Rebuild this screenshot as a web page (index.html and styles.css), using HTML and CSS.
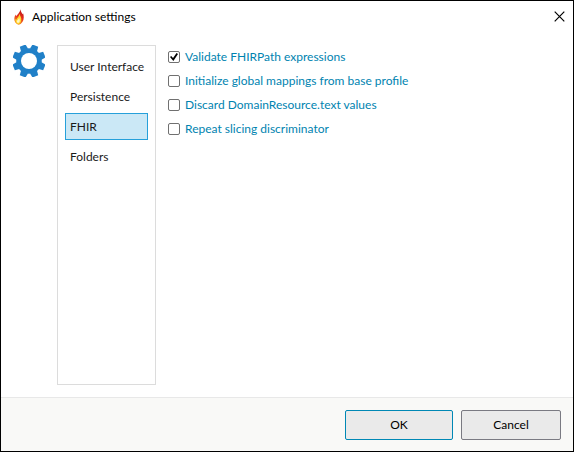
FILE: index.html
```html
<!DOCTYPE html>
<html lang="en">
<head>
<meta charset="utf-8">
<title>Application settings</title>
<link rel="stylesheet" href="styles.css">
</head>
<body>
<main class="window">
  <header class="titlebar">
    <svg class="flame" viewBox="0 0 12 16" aria-hidden="true">
      <defs>
        <linearGradient id="fire" x1="0.7" y1="0" x2="0.35" y2="1">
          <stop offset="0" stop-color="#b91414"/>
          <stop offset="0.5" stop-color="#e8301c"/>
          <stop offset="1" stop-color="#f6a21c"/>
        </linearGradient>
      </defs>
      <path fill="url(#fire)" d="M7.5 0.2C7.6 2.5 8.8 3.6 9.4 5.2C9.8 5 10 4.6 10 4C11 6.8 11.2 10.5 9.4 13C8.3 14.6 7 15.8 5.3 15.8C2.8 15 1.2 12.6 1.3 9.8C1.4 8 2 6.6 2.5 5.4C2.6 6.2 2.8 6.7 3.3 7C4.6 5.2 6.9 3.4 7.5 0.2Z"/>
      <path fill="#ffd92e" d="M6.4 4.8C6.8 7 8.9 8.6 8.2 11.4C7.8 13.4 6.6 14.8 5.1 15C3.2 14.2 2.2 12.4 2.4 10C2.8 10.6 3.1 10.8 3.5 10.8C4 8.8 6.4 7.6 6.4 4.8Z"/>
      <path fill="#fff6c4" d="M6.1 8.6C6.4 10.2 7.1 11 6.7 12.6C6.3 13.7 5.6 14.1 4.9 14C3.9 13.4 3.6 12.4 4.1 11.4C5 11 5.9 10.2 6.1 8.6Z"/>
    </svg>
    <h1 class="title">Application settings</h1>
    <button class="close" type="button" aria-label="Close">
      <svg class="close-icon" viewBox="0 0 11 11" aria-hidden="true"><path d="M0.7 0.7L10.3 10.3M10.3 0.7L0.7 10.3"/></svg>
    </button>
  </header>
  <form class="dialog">
    <div class="content">
      <svg class="gear" viewBox="-16 -16 32 32" aria-hidden="true">
        <defs><path id="tooth" d="M-3.6 -10V-13L-3.1 -16.6H3.1L3.6 -13V-10Z"/></defs>
        <circle r="10.8"/>
        <g class="teeth">
          <use href="#tooth" transform="rotate(22.5)"/>
          <use href="#tooth" transform="rotate(67.5)"/>
          <use href="#tooth" transform="rotate(112.5)"/>
          <use href="#tooth" transform="rotate(157.5)"/>
          <use href="#tooth" transform="rotate(202.5)"/>
          <use href="#tooth" transform="rotate(247.5)"/>
          <use href="#tooth" transform="rotate(292.5)"/>
          <use href="#tooth" transform="rotate(337.5)"/>
        </g>
        <circle class="hole" r="8"/>
      </svg>
      <nav class="sections">
        <a class="section" href="#ui">User Interface</a>
        <a class="section" href="#persistence">Persistence</a>
        <a class="section selected" href="#fhir" aria-current="page">FHIR</a>
        <a class="section" href="#folders">Folders</a>
      </nav>
      <div class="options">
        <label class="option"><input type="checkbox" checked>Validate FHIRPath expressions</label>
        <label class="option"><input type="checkbox">Initialize global mappings from base profile</label>
        <label class="option"><input type="checkbox">Discard DomainResource.text values</label>
        <label class="option"><input type="checkbox">Repeat slicing discriminator</label>
      </div>
    </div>
    <footer class="footer">
      <button class="button primary" type="button">OK</button>
      <button class="button" type="button">Cancel</button>
    </footer>
  </form>
</main>
</body>
</html>
```
FILE: styles.css
```css
* {
  box-sizing: border-box;
}

body {
  margin: 0;
  font: 12px/16px Lato, "Segoe UI", sans-serif;
  color: #000;
  background: #fff;
}

.window {
  display: flex;
  flex-direction: column;
  min-height: 100vh;
  border: 1px solid #000;
}

.titlebar {
  display: flex;
  align-items: center;
  height: 32px;
  padding: 0 8px 0 12px;
}

.flame {
  width: 12px;
  height: 16px;
}

.title {
  flex: 1;
  margin: 0 0 0 7px;
  font-size: 12px;
  font-weight: 400;
}

.close {
  display: flex;
  padding: 0 0 1px;
  border: 0;
  background: none;
}

.close-icon {
  width: 11px;
  height: 11px;
  fill: none;
  stroke: #000;
  stroke-width: 1.2;
}

.dialog {
  flex: 1;
  display: flex;
  flex-direction: column;
}

.content {
  flex: 1;
  display: flex;
  padding: 12px;
}

.gear {
  width: 32px;
  height: 32px;
  margin-right: 12px;
  fill: #2080c8;
}

.gear circle {
  stroke: #2080c8;
  stroke-width: 4;
}

.gear .hole {
  fill: #fff;
  stroke: none;
}

.sections {
  display: flex;
  flex-direction: column;
  gap: 3px;
  width: 99px;
  padding: 7px;
  border: 1px solid #dcdcdc;
}

.section {
  padding: 4px;
  border: 1px solid transparent;
  line-height: 17px;
  color: #1a1a1a;
  text-decoration: none;
  white-space: nowrap;
}

.section.selected {
  border-color: #26a0da;
  background: #cbe8f6;
}

.options {
  display: flex;
  flex-direction: column;
  gap: 8px;
  padding: 4px 0 0 12px;
}

.option {
  display: flex;
  align-items: center;
  gap: 5px;
  color: #0083b0;
  white-space: nowrap;
}

.option input {
  appearance: none;
  display: grid;
  place-items: center;
  width: 12px;
  height: 12px;
  margin: 0;
  border: 1px solid #707070;
  border-radius: 2px;
  background: #fff;
}

.option input:checked::before {
  content: "";
  width: 8px;
  height: 8px;
  background: #000;
  clip-path: polygon(0 50%, 15% 38%, 38% 62%, 82% 0, 100% 12%, 42% 100%);
}

.footer {
  display: flex;
  justify-content: flex-end;
  gap: 8px;
  padding: 12px 12px 11px;
  border-top: 1px solid #e8e8e8;
  background: #f9f9f7;
}

.button {
  width: 100px;
  height: 30px;
  padding: 0;
  border: 1px solid #7a7a82;
  border-radius: 2px;
  font: inherit;
  color: #000;
  background: #eaeaea;
}

.button.primary {
  width: 108px;
  border-color: #0088b5;
}
```
